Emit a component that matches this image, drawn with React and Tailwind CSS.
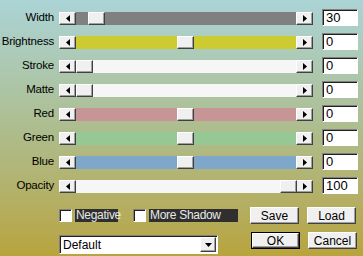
import React from "react";

const rows = [
  { label: "Width", track: "bg-[#808080]", thumb: 29, value: "30" },
  { label: "Brightness", track: "bg-[#cccb32]", thumb: 118, value: "0" },
  { label: "Stroke", track: "bg-[#f6f6f6]", thumb: 17, value: "0" },
  { label: "Matte", track: "bg-[#f6f6f6]", thumb: 17, value: "0" },
  { label: "Red", track: "bg-[#c89597]", thumb: 118, value: "0" },
  { label: "Green", track: "bg-[#96c896]", thumb: 118, value: "0" },
  { label: "Blue", track: "bg-[#7fa7c9]", thumb: 118, value: "0" },
  { label: "Opacity", track: "bg-[#f6f6f6]", thumb: 221, value: "100" },
];

const raised =
  "bg-[#f0f0f0] border border-t-white border-l-white border-r-[#404040] border-b-[#404040] shadow-[inset_-1px_-1px_#a0a0a0]";
const sunken =
  "bg-white border border-t-[#808080] border-l-[#808080] border-r-white border-b-white shadow-[inset_1px_1px_#202020]";

const Arrow = ({ dir }) => (
  <svg width="4" height="7" viewBox="0 0 4 7">
    {dir === "left" ? (
      <path d="M4 0 L0 3.5 L4 7 Z" fill="#000" />
    ) : (
      <path d="M0 0 L4 3.5 L0 7 Z" fill="#000" />
    )}
  </svg>
);

const Slider = ({ track, thumb }) => (
  <div className={`relative flex h-[13px] w-[254px] ${track}`}>
    <div className={`flex h-[13px] w-[17px] items-center justify-center ${raised}`}>
      <Arrow dir="left" />
    </div>
    <div className="flex-1" />
    <div className={`flex h-[13px] w-[17px] items-center justify-center ${raised}`}>
      <Arrow dir="right" />
    </div>
    <div
      className={`absolute top-0 h-[13px] w-[17px] ${raised}`}
      style={{ left: thumb }}
    />
  </div>
);

const Button = ({ children }) => (
  <div
    className={`flex h-[17px] w-[49px] items-center justify-center text-[12px] text-black ${raised}`}
  >
    {children}
  </div>
);

const Check = ({ label, w }) => (
  <div className="flex items-center gap-[3px]">
    <div className={`h-[13px] w-[13px] ${sunken}`} />
    <div className={`h-[13px] whitespace-nowrap bg-[#2f2f2f] pl-[1px] text-[12px] leading-[13px] tracking-[-0.3px] text-[#e8e8e8] ${w}`}>
      {label}
    </div>
  </div>
);

export default function App() {
  return (
    <div className="h-[256px] w-[363px] overflow-hidden bg-linear-to-b from-[#abd4d6] via-[#adbd8e] to-[#b8a43c] pt-[6px] font-['Liberation_Sans',Arial,sans-serif] text-[12px] text-black">
      <div className="flex flex-col">
        {rows.map((r) => (
          <div key={r.label} className="flex h-[24px] items-center">
            <div className="w-[54px] text-right text-[11.5px] leading-none tracking-[-0.2px]">{r.label}</div>
            <div className="ml-[5px]">
              <Slider track={r.track} thumb={r.thumb} />
            </div>
            <div
              className={`ml-[9px] mb-[2px] h-[17px] w-[36px] pl-[3px] text-[13px] leading-[15px] ${sunken}`}
            >
              {r.value}
            </div>
          </div>
        ))}
      </div>
      <div className="mt-[9px] flex items-center pl-[59px]">
        <Check label="Negative" w="w-[43px]" />
        <div className="ml-[15px]">
          <Check label="More Shadow" w="w-[89px]" />
        </div>
        <div className="ml-[12px] flex gap-[8px]">
          <Button>Save</Button>
          <Button>Load</Button>
        </div>
      </div>
      <div className="mt-[8px] flex items-start pl-[59px]">
        <div className={`mt-[3px] flex h-[19px] w-[159px] items-center justify-between pl-[3px] ${sunken}`}>
          <span className="leading-none">Default</span>
          <div className={`mr-[1px] flex h-[15px] w-[16px] items-center justify-center ${raised}`}>
            <svg width="7" height="4" viewBox="0 0 7 4">
              <path d="M0 0 L7 0 L3.5 4 Z" fill="#000" />
            </svg>
          </div>
        </div>
        <div className="ml-[33px] flex gap-[8px]">
          <div className="border border-black">
            <div
              className={`flex h-[15px] w-[47px] items-center justify-center text-[12px] ${raised}`}
            >
              OK
            </div>
          </div>
          <Button>Cancel</Button>
        </div>
      </div>
    </div>
  );
}
